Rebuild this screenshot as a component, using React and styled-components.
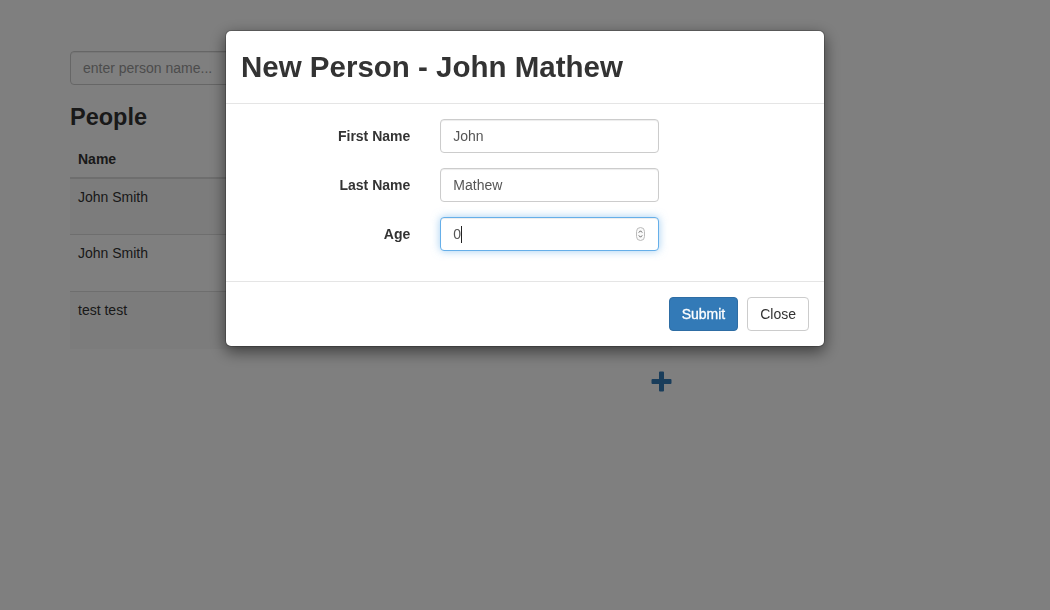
import React from "react";
import styled, { createGlobalStyle } from "styled-components";

const GlobalStyle = createGlobalStyle`
  html, body { margin: 0; padding: 0; }
  body {
    font-family: "Liberation Sans", Arial, sans-serif;
    font-size: 14px;
    line-height: 1.42857;
    color: #333;
    background: #fff;
  }
  * { box-sizing: border-box; }
`;

const Page = styled.div`
  min-height: 610px;
  padding: 51px 0 0 70px;
`;

const Main = styled.div`
  width: 602px;
  display: flex;
  flex-direction: column;
`;

const SearchInput = styled.input`
  width: 300px;
  height: 34px;
  padding: 6px 12px;
  font: inherit;
  color: #555;
  border: 1px solid #ccc;
  border-radius: 4px;
  box-shadow: inset 0 1px 1px rgba(0,0,0,.075);
  &::placeholder { color: #999; }
`;

const Heading = styled.h3`
  margin: 20px 0 10px;
  font-size: 23.5px;
  font-weight: bold;
  line-height: 1.1;
`;

const Table = styled.table`
  width: 100%;
  border-collapse: collapse;
  border-spacing: 0;
  margin-bottom: 22px;
`;

const Th = styled.th`
  text-align: left;
  padding: 8px;
  font-weight: bold;
  line-height: 20px;
  border-bottom: 2px solid #ddd;
`;

const Row = styled.tr`
  background: ${p => (p.$striped ? "#f9f9f9" : "transparent")};
`;

const Td = styled.td`
  padding: 8px;
  height: 57px;
  vertical-align: top;
  line-height: 20px;
  border-top: 1px solid #ddd;
`;

const PlusRow = styled.div`
  display: flex;
  justify-content: flex-end;
`;

const PlusLink = styled.a`
  display: flex;
  color: #337ab7;
  width: 21px;
  height: 21px;
`;

const Overlay = styled.div`
  position: fixed;
  inset: 0;
  background: rgba(0,0,0,.5);
`;

const Modal = styled.div`
  position: fixed;
  top: 30px;
  left: 225px;
  width: 600px;
  background: #fff;
  border: 1px solid rgba(0,0,0,.2);
  border-radius: 6px;
  box-shadow: 0 5px 15px rgba(0,0,0,.5);
  background-clip: padding-box;
`;

const ModalHeader = styled.div`
  padding: 15px;
  border-bottom: 1px solid #e5e5e5;
`;

const ModalTitle = styled.h2`
  margin: 0;
  font-size: 29.5px;
  font-weight: bold;
  line-height: 1.42857;
  color: #333;
`;

const ModalBody = styled.div`
  padding: 15px;
`;

const FormGroup = styled.div`
  display: grid;
  grid-template-columns: 199.3px 249.2px;
  margin: 0 -15px 15px;
`;

const Label = styled.label`
  padding: 7px 15px 0;
  text-align: right;
  font-weight: bold;
  line-height: 20px;
`;

const FieldCol = styled.div`
  padding: 0 15px;
`;

const FieldWrap = styled.div`
  position: relative;
  height: 34px;
`;

const Input = styled.input`
  display: block;
  width: 100%;
  height: 34px;
  padding: 6px 12px;
  font: inherit;
  color: #555;
  background: #fff;
  border: 1px solid ${p => (p.$focused ? "#66afe9" : "#ccc")};
  border-radius: 4px;
  outline: none;
  box-shadow: ${p =>
    p.$focused
      ? "inset 0 1px 1px rgba(0,0,0,.075), 0 0 8px rgba(102,175,233,.6)"
      : "inset 0 1px 1px rgba(0,0,0,.075)"};
`;

const Caret = styled.span`
  position: absolute;
  left: 21px;
  top: 9px;
  width: 1px;
  height: 17px;
  background: #222;
`;

const Spinner = styled.svg`
  position: absolute;
  right: 14px;
  top: 10px;
`;

const ModalFooter = styled.div`
  padding: 15px;
  border-top: 1px solid #e5e5e5;
  display: flex;
  justify-content: flex-end;
  gap: 9px;
`;

const Button = styled.button`
  height: 34px;
  padding: 6px 12px;
  font: inherit;
  font-size: 14px;
  line-height: 20px;
  border-radius: 4px;
  border: 1px solid ${p => (p.$primary ? "#2e6da4" : "#ccc")};
  background: ${p => (p.$primary ? "#337ab7" : "#fff")};
  color: ${p => (p.$primary ? "#fff" : "#333")};
  font-weight: normal;
  -webkit-text-stroke: ${p => (p.$primary ? "0.3px #fff" : "0")};
  cursor: pointer;
`;

const people = ["John Smith", "John Smith", "test test"];

export default function App() {
  return (
    <>
      <GlobalStyle />
      <Page>
        <Main>
          <SearchInput placeholder="enter person name..." />
          <Heading>People</Heading>
          <Table>
            <thead>
              <tr>
                <Th>Name</Th>
              </tr>
            </thead>
            <tbody>
              {people.map((n, i) => (
                <Row key={i} $striped={i % 2 === 0}>
                  <Td>{n}</Td>
                </Row>
              ))}
            </tbody>
          </Table>
          <PlusRow>
            <PlusLink>
              <svg width="21" height="21" viewBox="0 0 21 21">
                <path
                  d="M8 1.5 Q8 0.5 9 0.5 H12 Q13 0.5 13 1.5 V8 H19.5 Q20.5 8 20.5 9 V12 Q20.5 13 19.5 13 H13 V19.5 Q13 20.5 12 20.5 H9 Q8 20.5 8 19.5 V13 H1.5 Q0.5 13 0.5 12 V9 Q0.5 8 1.5 8 H8 Z"
                  fill="currentColor"
                />
              </svg>
            </PlusLink>
          </PlusRow>
        </Main>
      </Page>
      <Overlay />
      <Modal>
        <ModalHeader>
          <ModalTitle>New Person - John Mathew</ModalTitle>
        </ModalHeader>
        <ModalBody>
          <FormGroup>
            <Label>First Name</Label>
            <FieldCol>
              <FieldWrap>
                <Input defaultValue="John" />
              </FieldWrap>
            </FieldCol>
          </FormGroup>
          <FormGroup>
            <Label>Last Name</Label>
            <FieldCol>
              <FieldWrap>
                <Input defaultValue="Mathew" />
              </FieldWrap>
            </FieldCol>
          </FormGroup>
          <FormGroup>
            <Label>Age</Label>
            <FieldCol>
              <FieldWrap>
                <Input $focused defaultValue="0" readOnly />
                <Caret />
                <Spinner width="9" height="14" viewBox="0 0 9 14">
                  <rect x="0.5" y="0.5" width="8" height="13" rx="4" fill="#fafafa" stroke="#bbb" />
                  <path d="M2.8 5.6 L4.5 3.8 L6.2 5.6" fill="none" stroke="#555" strokeWidth="0.9" />
                  <path d="M2.8 8.4 L4.5 10.2 L6.2 8.4" fill="none" stroke="#555" strokeWidth="0.9" />
                </Spinner>
              </FieldWrap>
            </FieldCol>
          </FormGroup>
        </ModalBody>
        <ModalFooter>
          <Button $primary>Submit</Button>
          <Button>Close</Button>
        </ModalFooter>
      </Modal>
    </>
  );
}
